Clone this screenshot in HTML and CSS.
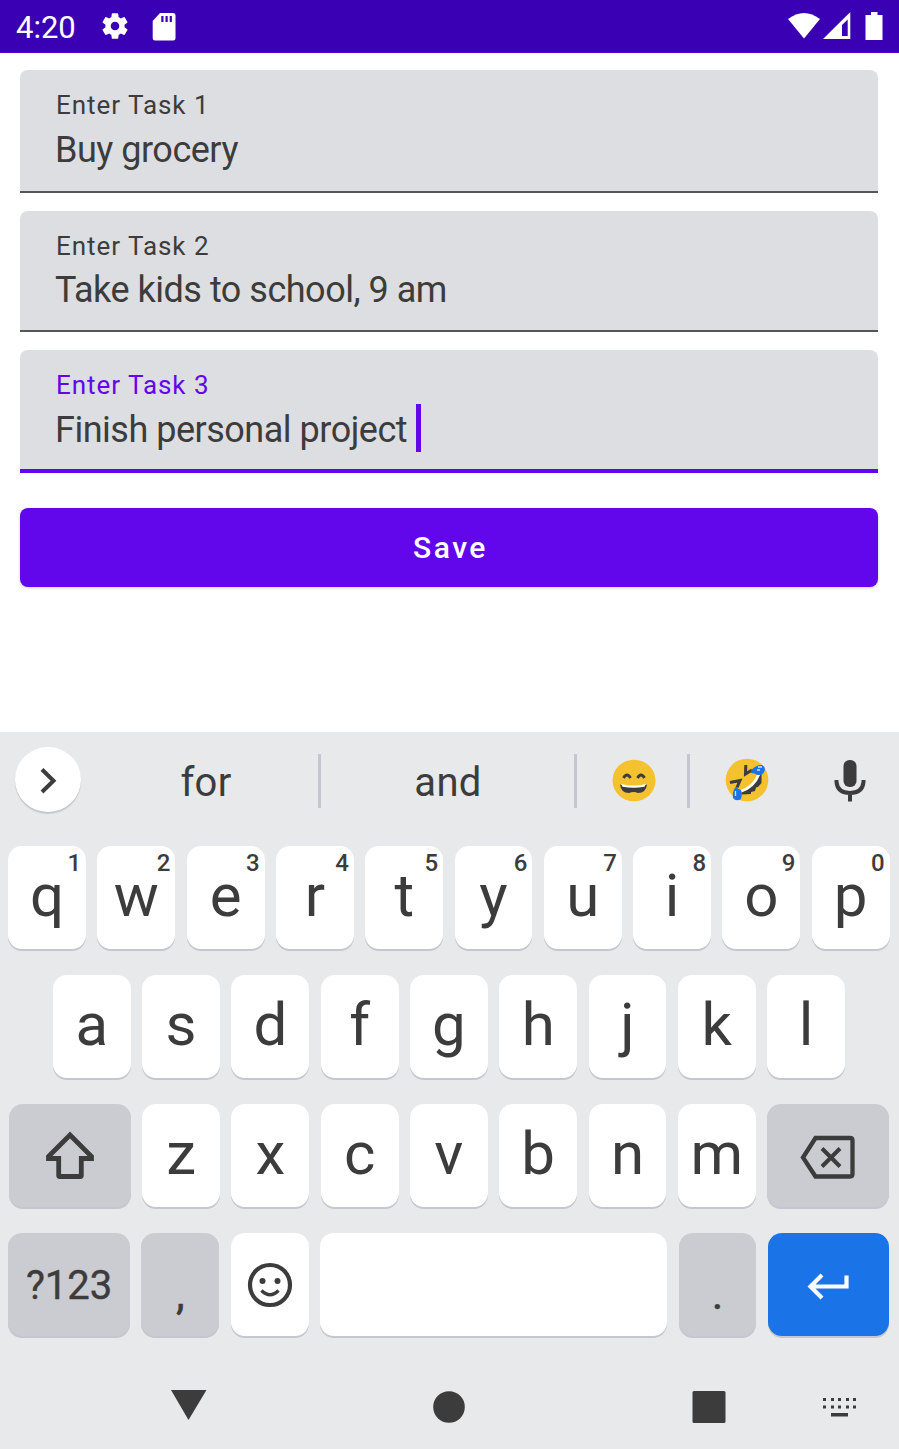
FILE: index.html
```html
<!DOCTYPE html>
<html lang="en">
<head>
<meta charset="utf-8">
<title>Tasks</title>
<link rel="stylesheet" href="styles.css">
</head>
<body>
<header class="status">
  <span class="clock">4:20</span>
  <svg class="gear" width="32" height="32" viewBox="0 0 24 24"><path fill="#fff" d="M19.140 12.940c.04-.3.06-.61.06-.94 0-.32-.02-.64-.07-.94l2.030-1.580a.49.49 0 0 0 .12-.61l-1.920-3.320a.49.49 0 0 0-.59-.22l-2.390.96c-.5-.38-1.030-.7-1.620-.94l-.36-2.540a.48.48 0 0 0-.48-.41h-3.840c-.24 0-.43.17-.47.41l-.36 2.540c-.59.24-1.130.57-1.620.94l-2.390-.96c-.22-.08-.47 0-.59.22L2.740 8.870c-.12.21-.08.47.12.61l2.030 1.580c-.05.3-.09.63-.09.94s.02.64.07.94l-2.030 1.580a.49.49 0 0 0-.12.61l1.920 3.320c.12.22.37.29.59.22l2.390-.96c.5.38 1.030.7 1.620.94l.36 2.540c.05.24.24.41.48.41h3.840c.24 0 .44-.17.47-.41l.36-2.540c.59-.24 1.130-.56 1.620-.94l2.390.96c.22.08.47 0 .59-.22l1.920-3.320c.12-.22.07-.47-.12-.61zM12 15.200A3.200 3.200 0 1 1 12 8.800a3.200 3.200 0 0 1 0 6.400z"/></svg>
  <svg class="sd" width="24" height="28" viewBox="0 0 24 28"><path fill="#fff" fill-rule="evenodd" d="M8 0h13q2.500 0 2.500 2.500v22.500q0 2.500-2.500 2.500H3.200Q.7 27.500.7 25V8zM9.300 3v6h2.200v-6zM13.500 3v6h2.200v-6zM17.700 3v6h2.200v-6z"/></svg>
  <span class="spacer"></span>
  <svg width="88" height="29" viewBox="0 0 88 29"><path fill="#fff" d="M0 7Q16-5 32 7L16 26.500z"/><path fill="#fff" fill-rule="evenodd" d="M35 27 62.300 0v27zM54 24h5.700V7.500l-5.700 5.500z"/><path fill="#fff" d="M83 0h6.500v3h5v25h-17V3H83z"/></svg>
</header>
<main class="form">
  <div class="field"><span class="label">Enter Task 1</span><span class="value">Buy grocery</span></div>
  <div class="field second"><span class="label">Enter Task 2</span><span class="value">Take kids to school, 9 am</span></div>
  <div class="field active"><span class="label">Enter Task 3</span><span class="value">Finish personal project<i class="caret"></i></span></div>
  <button class="save">Save</button>
</main>
<section class="keyboard">
  <div class="suggest">
    <span class="expand"><svg width="66" height="66" viewBox="0 0 66 66"><path d="m27 22.500 11.500 11.300L27 45" fill="none" stroke="#3c3c3c" stroke-width="4"/></svg></span>
    <span class="word first">for</span>
    <span class="word next">and</span>
    <span class="emoji em1"><svg width="44" height="44" viewBox="0 0 44 44"><ellipse cx="22" cy="21.500" rx="21.500" ry="20.800" fill="#f4c22f"/><path d="M11.500 19q3.500-6 7 0M25.500 19q3.500-6 7 0" fill="none" stroke="#3c3c3c" stroke-width="2.800"/><path d="M8 25.500q14 3 27 0-1 8.500-9 8.500-4.500-2-9 0-8 0-9-8.500z" fill="#3c3c3c"/><path d="M9 25q13 3 25 0l-1.500 2.800q-11 2-22 0z" fill="#fff"/></svg></span>
    <span class="emoji em2"><svg width="44" height="44" viewBox="0 0 44 44"><circle cx="22" cy="21" r="21.300" fill="#f4c22f"/><path d="M33 15h3.500v9l-3.500 4-2 .5-1 3.500-4 1v2l-9 .5-1.500-3Q28 28 33 15z" fill="#3c3c3c"/><path d="M34 15Q29 28 15.500 32.500" fill="none" stroke="#fff" stroke-width="2.800"/><path d="m20.800 6-.3 9 6.500-4M5 23.500l10-2-3 7" fill="none" stroke="#3c3c3c" stroke-width="3"/><path d="M26 11.500q5-6 11-5.500 4 2 2.500 6-1.500 4.500-7 4-3-2-6.500-2zM11 27.500q1.500 2.500 5 3.500 2 5-.5 9.500-5 2-7.500-1.500-1-7 3-11.500z" fill="#1b73e8"/><path d="M33 8h4m-5 3h3M10.500 32v5" stroke="#cfe1ff" stroke-width="1.300"/></svg></span>
    <span class="mic"><svg width="32" height="44" viewBox="0 0 32 44"><rect x="9.500" y="0" width="13" height="27" rx="6" fill="#3c3c3c"/><path d="M2.500 20v2q1 11 13.500 11t13.500-11v-2M16 33v8.500" fill="none" stroke="#3c3c3c" stroke-width="4"/></svg></span>
  </div>
  <div class="row">
    <span class="key">q<sup>1</sup></span><span class="key">w<sup>2</sup></span><span class="key">e<sup>3</sup></span><span class="key">r<sup>4</sup></span><span class="key">t<sup>5</sup></span><span class="key">y<sup>6</sup></span><span class="key">u<sup>7</sup></span><span class="key">i<sup>8</sup></span><span class="key">o<sup>9</sup></span><span class="key">p<sup>0</sup></span>
  </div>
  <div class="row">
    <span class="key">a</span><span class="key">s</span><span class="key">d</span><span class="key">f</span><span class="key">g</span><span class="key">h</span><span class="key">j</span><span class="key">k</span><span class="key">l</span>
  </div>
  <div class="row">
    <span class="key wide grey"><svg width="52" height="50" viewBox="0 0 52 50"><path d="M26 4 4.500 25.500v2h10.200v17q0 1 1 1h20.600q1 0 1-1v-17h10.200v-2z" fill="none" stroke="#3c3c3c" stroke-width="4.800"/></svg></span><span class="key">z</span><span class="key">x</span><span class="key">c</span><span class="key">v</span><span class="key">b</span><span class="key">n</span><span class="key">m</span><span class="key wide grey"><svg width="56" height="46" viewBox="0 0 56 46"><path d="M3 24.500 15.500 5H50q2.500 0 2.500 2.500v33.500q0 2.500-2.500 2.500H15.500z" fill="none" stroke="#3c3c3c" stroke-width="4.300"/><path d="m22 15.500 18 18m0-18-18 18" stroke="#3c3c3c" stroke-width="4"/></svg></span>
  </div>
  <div class="row">
    <span class="key wide grey sym">?123</span><span class="key grey punct">,</span><span class="key"><svg width="46" height="46" viewBox="0 0 46 46"><circle cx="23" cy="23" r="20" fill="none" stroke="#3c3c3c" stroke-width="4.200"/><circle cx="15.500" cy="19" r="3" fill="#3c3c3c"/><circle cx="30.500" cy="19" r="3" fill="#3c3c3c"/><path d="M14.500 28.500q8.500 8.500 17 0" fill="none" stroke="#3c3c3c" stroke-width="3.500"/></svg></span><span class="key space"></span><span class="key grey punct">.</span><span class="key wide enter"><svg width="44" height="28" viewBox="0 0 44 28"><path d="M15 4 3.500 15.500 15 27M4 15.500h35.500V4.500" fill="none" stroke="#fff" stroke-width="4.200"/></svg></span>
  </div>
  <nav class="nav">
    <svg width="899" height="60" viewBox="0 0 899 60"><g fill="#3c3c3c"><path d="M171 15h35.500L188.500 45z"/><circle cx="449" cy="32" r="15.800"/><rect x="692.500" y="16" width="33" height="32" rx="1.500"/><path d="M823 23h3v3h-3zm8 0h3v3h-3zm7 0h3v3h-3zm8 0h3v3h-3zm7 0h3v3h-3zM823 30.500h3v3h-3zm8 0h3v3h-3zm7 0h3v3h-3zm8 0h3v3h-3zm7 0h3v3h-3zM831 38h17v3.500h-17z"/></g></svg>
  </nav>
</section>
</body>
</html>
```
FILE: styles.css
```css
* { box-sizing: border-box; }
body { margin: 0; width: 899px; height: 1449px; background: #fff; color: #3c3c3c; font-family: Roboto, sans-serif; display: flex; flex-direction: column; overflow: hidden; }
svg { display: block; flex: none; overflow: visible; }
.status { height: 53px; background: #3a00b3; border-bottom: 1px solid #5200d0; color: #fff; display: flex; align-items: center; padding: 0 23px 0 16px; flex: none; }
.clock { font-size: 31px; line-height: 53px; width: 83px; padding-top: 2px; }
.sd { margin-left: 21px; margin-top: 2px; }
.spacer { flex: 1; }
.form { height: 679px; padding: 17px 21px 0 20px; flex: none; }
.field { height: 123px; margin-bottom: 18px; background: #dddee1; border-radius: 8px 8px 0 0; border-bottom: 2px solid #55555a; padding: 20px 36px 0; display: flex; flex-direction: column; }
.second { height: 121px; }
.active { border-bottom: 4px solid #6206ec; }
.label { font-size: 26px; line-height: 30px; letter-spacing: .95px; }
.active .label { color: #6206ec; }
.value { font-size: 36px; line-height: 42px; margin: 9px 0 0 -1px; letter-spacing: -.49px; display: flex; align-items: center; }
.second .value { margin-top: 8px; }
.caret { width: 5px; height: 48px; background: #6206ec; margin: -5px 0 -1px 9px; }
.save { display: block; width: 858px; height: 79px; margin-top: 35px; border: 0; border-radius: 8px; background: #6206ec; box-shadow: 0 1px 3px #0003; color: #fff; font: 500 30px/79px Roboto, sans-serif; letter-spacing: 2.5px; padding: 0 0 1px 3px; }
.keyboard { background: #e7e9eb; height: 717px; flex: none; }
.suggest { height: 114px; display: flex; padding: 15px 0 0 15px; }
.expand { width: 66px; height: 65px; border-radius: 50%; background: #fff; box-shadow: 0 2px 1px #c5c6ce; }
.word { font-size: 40px; line-height: 58px; letter-spacing: .3px; text-align: center; height: 54px; margin-top: 7px; border-right: 3px solid #c5c6ce; }
.first { width: 240px; padding-left: 13px; }
.next { width: 256px; padding-left: 1px; }
.emoji { height: 54px; margin-top: 7px; display: flex; align-items: center; justify-content: center; }
.em1 { width: 113px; padding-left: 4px; border-right: 3px solid #c5c6ce; }
.em2 { width: 114px; }
.mic { margin: 13px 0 0 29.500px; }
.row { display: flex; justify-content: center; gap: 11.400px; height: 129px; width: 881.200px; margin-left: 8.300px; }
.key { position: relative; width: 77.900px; height: 103px; border-radius: 14px; background: #fff; box-shadow: 0 2px 0 #c5c6ce; font-size: 60px; line-height: 99px; display: flex; justify-content: center; flex: none; }
.key > svg { align-self: center; }
sup { position: absolute; top: 5px; right: 5px; font-size: 24px; line-height: 25px; font-weight: 500; }
.wide { width: 121.700px; }
.grey { background: #cbccd2; }
.sym { font-size: 40px; line-height: 106px; letter-spacing: 0; -webkit-text-stroke: .4px #3c3c3c; }
.punct { font-size: 44px; line-height: 123px; -webkit-text-stroke: .5px #3c3c3c; }
.space { flex: 1; }
.enter { background: #1b73e8; }
.nav { height: 87px; padding-top: 13px; }
```
